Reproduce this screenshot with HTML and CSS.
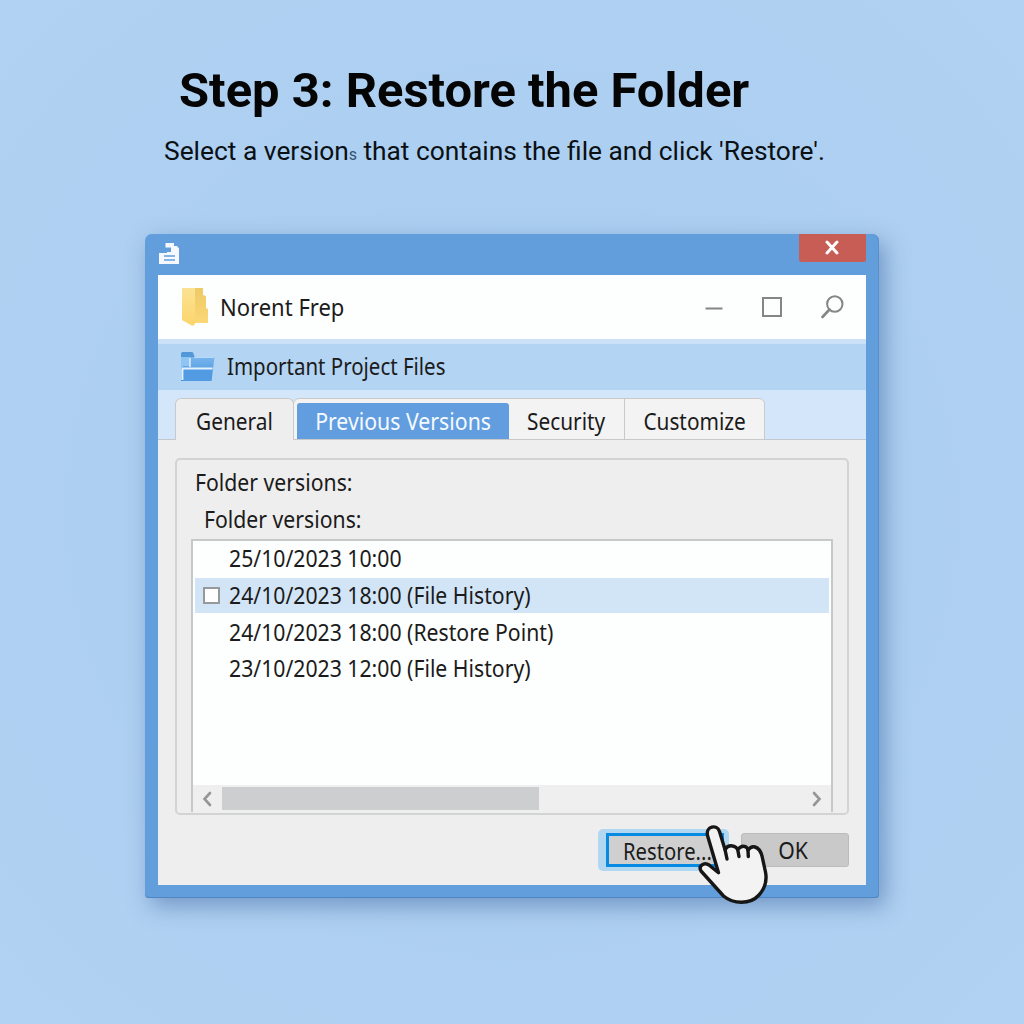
FILE: index.html
```html
<!DOCTYPE html>
<html lang="en">
<head>
<meta charset="utf-8">
<title>Restore the Folder</title>
<link rel="stylesheet" href="styles.css">
</head>
<body>
<main class="page">
  <h1 class="title">Step 3: Restore the Folder</h1>
  <p class="subtitle">Select a version<span class="ghost">s</span> that contains the file and click 'Restore'.</p>

  <section class="window">
    <header class="titlebar">
      <svg class="doc-icon" width="20" height="22" viewBox="0 0 20 22">
        <path d="M6.500 0H15V3H18L20 5.500V21H0V10H8V9H12V4.500H6.500Z" fill="#f5f9ff"/>
        <path d="M5 13H16M5 17H16" stroke="#629edb" stroke-width="1.700"/>
      </svg>
      <button class="close" aria-label="Close">
        <svg width="14" height="15" viewBox="0 0 14 15"><path d="M2 2L12 13M12 2L2 13" stroke="#fff" stroke-width="3" stroke-linecap="round"/></svg>
      </button>
    </header>

    <div class="content">
      <div class="name-row">
        <svg class="yellow-folder" width="27" height="38" viewBox="0 0 27 38">
          <defs>
            <linearGradient id="ya" x2="0" y2="1"><stop stop-color="#fbe293"/><stop offset="1" stop-color="#fbd56b"/></linearGradient>
            <linearGradient id="yb" x2="0" y2="1"><stop stop-color="#eec967"/><stop offset="1" stop-color="#fbd875"/></linearGradient>
          </defs>
          <path d="M13 0H21V7L24 8V20L26 21V35H13Z" fill="url(#yb)"/>
          <path d="M0 0H13V36L10.500 38L0 32Z" fill="url(#ya)"/>
        </svg>
        <span class="text name">Norent Frep</span>
        <div class="controls">
          <svg width="18" height="24" viewBox="0 0 18 24"><path d="M.5 13.500H17.500" stroke="#858585" stroke-width="2"/></svg>
          <svg width="20" height="20" viewBox="0 0 20 20"><rect x="1" y="1" width="18" height="18" fill="none" stroke="#858585" stroke-width="2"/></svg>
          <svg width="24" height="24" viewBox="0 0 24 24" fill="none" stroke="#858585"><circle cx="13.800" cy="9" r="7.700" stroke-width="2"/><path d="M8.500 14.500L1.500 22" stroke-width="2.600" stroke-linecap="round"/></svg>
        </div>
      </div>

      <div class="folder-row">
        <svg width="34" height="30" viewBox="0 0 34 30">
          <defs><linearGradient id="fb" x2="0" y2="1"><stop stop-color="#78b5ed"/><stop offset="1" stop-color="#438fdb"/></linearGradient></defs>
          <path d="M0 2Q0 0 1.500 0H11Q12.500 0 13 3.500L14 5H0Z" fill="#5298d8"/>
          <path d="M0 5H33.500L30.500 29H0Z" fill="url(#fb)"/>
          <path d="M0 5H9V14H2V28H0Z" fill="#8fc5f2"/>
          <path d="M9 6V15" fill="none" stroke="#dceeff" stroke-width="1.500"/>
          <path d="M2.500 17H31.300L30 29H2Z" fill="#529be2"/>
          <path d="M1.500 28V17.500Q1.500 16.500 2.500 16.500H31.500" fill="none" stroke="#e3f1ff" stroke-width="1.800"/>
          <path d="M13 5.500H33" fill="none" stroke="#b8dafa"/>
        </svg>
        <span class="text folder-name">Important Project Files</span>
      </div>

      <nav class="tabs">
        <span class="tab tab-general"><span class="text">General</span></span>
        <div class="tab-group">
          <span class="tab tab-previous"><span class="text">Previous Versions</span></span>
          <span class="tab tab-security"><span class="text">Security</span></span>
          <span class="tab tab-customize"><span class="text">Customize</span></span>
        </div>
      </nav>

      <div class="panel">
        <div class="group">
          <div class="label"><span class="text">Folder versions:</span></div>
          <div class="label label-inner"><span class="text">Folder versions:</span></div>
          <div class="list">
            <div class="rows">
              <div class="row first"><span class="box"></span><span class="text">25/10/2023 10:00</span></div>
              <div class="row selected"><span class="box visible"></span><span class="text">24/10/2023 18:00 (File History)</span></div>
              <div class="row"><span class="box"></span><span class="text">24/10/2023 18:00 (Restore Point)</span></div>
              <div class="row last"><span class="box"></span><span class="text">23/10/2023 12:00 (File History)</span></div>
            </div>
            <div class="scrollbar">
              <svg class="arrow" width="10" height="16" viewBox="0 0 10 16"><path d="M8 2L2.500 8L8 14" fill="none" stroke="#969696" stroke-width="2.600" stroke-linecap="round"/></svg>
              <span class="thumb"></span>
              <svg class="arrow arrow-right" width="10" height="16" viewBox="0 0 10 16"><path d="M2 2L7.500 8L2 14" fill="none" stroke="#969696" stroke-width="2.600" stroke-linecap="round"/></svg>
            </div>
          </div>
        </div>

        <div class="actions">
          <span class="focus"><button class="btn restore"><span class="text">Restore...</span></button></span>
          <button class="btn ok"><span class="text">OK</span></button>
          <svg class="hand" width="74" height="82" viewBox="0 0 74 82">
            <path d="M10.500 11.500C8.500 2 20 0 22.500 7.500L28 25.500Q31 21 35.500 22Q39 22.500 40.700 25.500Q45 20.500 49 23Q50.500 24 51 26Q54 22 58 23Q63 24.500 65 32L68.500 48Q71 61 62 71C53 81 36 80 26.500 72L13 57L4 47C1 42 7 37.500 12 41L21.500 48.700Z" fill="#f3f3f3" stroke="#161616" stroke-width="3.400" stroke-linejoin="round"/>
            <path d="M28 25.500L30 35M40.700 25.500L42 32.500M51 26L51.300 32.500" fill="none" stroke="#161616" stroke-width="3.400" stroke-linecap="round"/>
          </svg>
        </div>
      </div>
    </div>
  </section>
</main>
</body>
</html>
```
FILE: styles.css
```css
* { box-sizing: border-box; }
body {
  margin: 0;
  font-family: "Noto Sans", sans-serif;
  font-size: 23px;
  line-height: 30px;
  color: #1b1b1b;
}
svg { display: block; flex: none; }
button { font: inherit; color: inherit; padding: 0; border: 0; }
.text {
  display: inline-block;
  white-space: nowrap;
  transform: scaleX(.922);
  transform-origin: left center;
}
.page {
  width: 1024px;
  height: 1024px;
  padding-top: 61px;
  overflow: hidden;
  background: radial-gradient(circle at 50% 50%, #a9cff2 0%, #adcff1 55%, #b1d2f2 100%);
}
.title {
  margin: 0 0 0 179px;
  font: 700 48.9px/60px Roboto, sans-serif;
  color: #050505;
  white-space: nowrap;
}
.subtitle {
  margin: 12px 0 0 164px;
  font: 400 26.350px/36px Roboto, sans-serif;
  color: #0b1014;
  white-space: nowrap;
}
.ghost {
  display: inline-block;
  width: 8px;
  font-size: 16px;
  line-height: 20px;
  color: #33546f;
}
.window {
  width: 734px;
  height: 664px;
  margin: 65px 0 0 145px;
  padding: 0 13px 13px;
  border-radius: 7px 7px 4px 4px;
  background: #629edb;
  box-shadow: inset 0 -1px #4d86c0, inset -1px 0 #5790cb, 6px 8px 22px rgba(55, 95, 155, .5);
}
.titlebar { display: flex; justify-content: space-between; height: 41px; }
.doc-icon { margin: 9px 0 0 1px; }
.close {
  display: flex;
  align-items: center;
  justify-content: center;
  width: 67px;
  height: 28px;
  padding: 0 2px 2px 0;
  border-radius: 0 0 2px 3px;
  background: #c75d55;
}
.content { height: 610px; background: #eeeeee; }
.name-row { display: flex; align-items: center; height: 64px; padding: 0 21px 0 24px; background: #fdfefe; }
.name { margin-left: 11px; transform: scaleX(.957); }
.controls { display: flex; align-items: center; gap: 39px; margin-left: auto; }
.folder-row {
  display: flex;
  align-items: center;
  height: 51px;
  padding-left: 23px;
  border-top: 5px solid #cbe1f7;
  background: #b3d4f2;
}
.folder-name { margin: -2px 0 0 12px; transform: scaleX(.89); }
.tabs {
  display: flex;
  height: 50px;
  padding: 8px 0 0 17px;
  background: linear-gradient(#c4c8cc, #c4c8cc) bottom / 100% 1px no-repeat, #d4e6f9;
}
.tab { display: flex; align-items: center; justify-content: center; white-space: nowrap; }
.tab .text { transform-origin: center; transform: scaleX(.905); }
.tab-general {
  width: 119px;
  height: 42px;
  padding-top: 3px;
  border: 1px solid #c9c9c9;
  border-bottom: 0;
  border-radius: 6px 6px 0 0;
  background: #eeeeee;
}
.tab-group {
  display: flex;
  width: 472px;
  margin-left: -1px;
  border: 1px solid #c9c9c9;
  border-radius: 6px 6px 0 0;
  background: #f3f3f3;
}
.tab-previous { width: 212px; margin: 4px 0 0 3px; border-radius: 3px 3px 0 0; background: #619ddf; color: #f5faff; }
.tab-previous .text { transform: scaleX(.925); }
.tab-security { width: 116px; padding-top: 3px; border-right: 1px solid #c9c9c9; }
.tab-customize { flex: 1; padding-top: 3px; }
.panel { padding: 18px 17px 0; }
.group {
  height: 357px;
  padding: 7px 15px 0;
  border: 2px solid #d2d4d4;
  border-radius: 5px;
}
.label { height: 37px; padding-left: 3px; }
.label-inner { padding-left: 12px; }
.list {
  display: flex;
  flex-direction: column;
  justify-content: space-between;
  width: 642px;
  height: 273px;
  margin: -2px 0 0 -1px;
  border: 2px solid #c6c8c9;
  border-bottom: 0;
  background: #fdfefe;
}
.rows { padding: 0 2px; }
.row { display: flex; align-items: center; height: 37px; padding-left: 8px; white-space: nowrap; }
.first { padding-bottom: 3px; }
.last { padding-bottom: 1px; }
.selected { height: 35px; background: #d2e5f7; }
.selected .text { margin-top: -2px; }
.box { flex: none; width: 17px; height: 17px; margin-right: 9px; }
.visible { border: 2px solid #969a9d; background: #fff; }
.scrollbar { display: flex; align-items: center; height: 27px; padding: 0 9px; background: #efefef; }
.thumb { width: 317px; height: 23px; margin-left: 10px; background: #cdcecf; }
.arrow-right { margin-left: auto; }
.actions { position: relative; display: flex; align-items: center; justify-content: flex-end; height: 42px; margin-top: 14px; }
.focus { width: 131px; height: 42px; padding: 4px 8px; border-radius: 5px; background: #b2d7f1; }
.btn { display: block; height: 34px; }
.btn .text { vertical-align: top; }
.restore { width: 118px; border: 3px solid #078ae2; background: #cfcfcf; text-align: left; padding-left: 14px; }
.restore .text { transform: scaleX(.88); }
.ok { width: 108px; margin-left: 12px; padding-right: 3px; border: 1px solid #bcbcbc; border-radius: 3px; background: #c9c9c9; }
.ok .text { transform-origin: center; }
.hand { position: absolute; left: 522px; top: -5px; }
```
